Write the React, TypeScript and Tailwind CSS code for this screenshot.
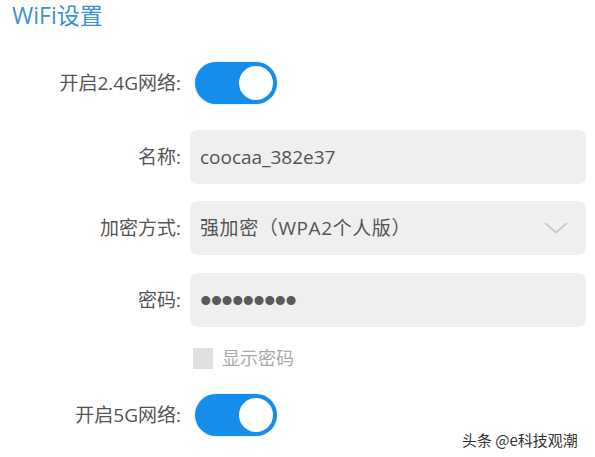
const font = { fontFamily: '"Open Sans", "Noto Sans CJK SC", sans-serif' };

function Toggle() {
  return (
    <div className="ml-[5px] flex h-[42px] w-[82px] items-center justify-end rounded-full bg-[#168ceb] pr-[1px] shadow-[0_0_2px_#9fd0f7]">
      <div className="h-[40px] w-[40px] rounded-full border-[3px] border-[#168ceb] bg-white" />
    </div>
  );
}

function Row({ label, children, className = "" }: { label?: string; children: React.ReactNode; className?: string }) {
  return (
    <div className={`flex items-center ${className}`}>
      <div className="w-[182px] shrink-0 pr-[1px] text-right text-[19px] text-[#555]">{label}</div>
      <div className="ml-[8px] flex-1">{children}</div>
    </div>
  );
}

function Field({ children }: { children: React.ReactNode }) {
  return (
    <div className="mr-[9px] flex h-[54px] items-center rounded-[7px] bg-[#efefef] pl-[10px] pr-[18px] text-[19px] text-[#555]">
      {children}
    </div>
  );
}

export default function App() {
  return (
    <div className="relative h-[457px] w-[595px] overflow-hidden bg-white" style={font}>
      <div className="pl-[12px] pt-[2px] text-[23px] leading-[26px] text-[#3b8fd6]">WiFi设置</div>

      <Row label="开启2.4G网络:" className="mt-[34px]">
        <Toggle />
      </Row>

      <Row label="名称:" className="mt-[26px]">
        <Field>coocaa_382e37</Field>
      </Row>

      <Row label="加密方式:" className="mt-[17px]">
        <Field>
          <span className="flex-1 tracking-[0.6px]">强加密（WPA2个人版）</span>
          <svg width="24" height="12" viewBox="0 0 24 12" fill="none">
            <path d="M1 1 L12 10.5 L23 1" stroke="#c2c2c2" strokeWidth="1.6" />
          </svg>
        </Field>
      </Row>

      <Row label="密码:" className="mt-[18px]">
        <Field>
          <span className="text-[33px] leading-none tracking-[-0.9px] text-[#5a5a5a]" style={{ fontFamily: '"Liberation Sans", sans-serif' }}>
            •••••••••
          </span>
        </Field>
      </Row>

      <Row className="mt-[21px]">
        <div className="flex items-center">
          <div className="ml-[3px] h-[21px] w-[20px] bg-[#e0e0e0]" />
          <span className="ml-[9px] text-[18px] leading-[21px] text-[#aaa]">显示密码</span>
        </div>
      </Row>

      <Row label="开启5G网络:" className="mt-[25px]">
        <Toggle />
      </Row>

      <div className="absolute left-[462px] top-[429px] text-[15px] text-[#333] [text-shadow:0_0_2px_#fff]" style={{ fontFamily: '"Noto Sans CJK SC", sans-serif' }}>
        头条 @e科技观潮
      </div>
    </div>
  );
}
